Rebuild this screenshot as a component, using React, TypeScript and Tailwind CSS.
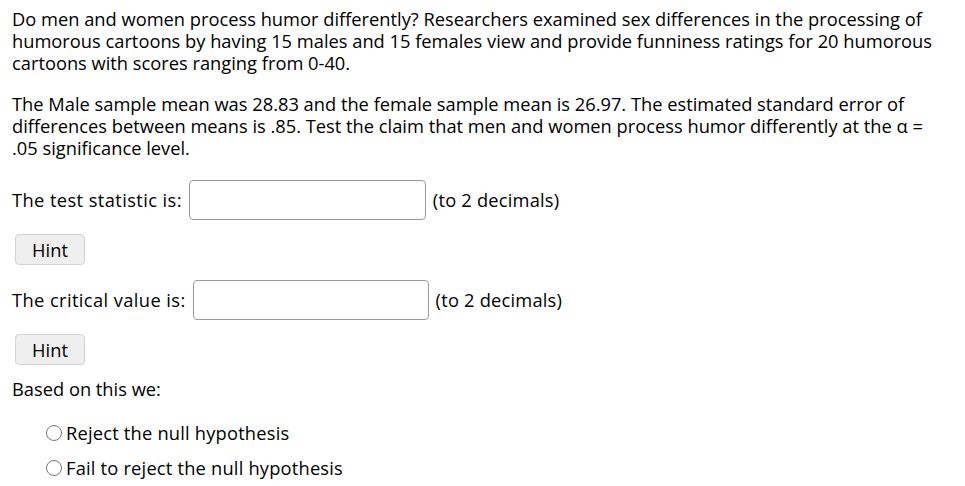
export default function App() {
  return (
    <div className="bg-white text-black px-3 pt-2 pb-4 text-[18.3px] leading-[22px] font-['Open_Sans',sans-serif]">
      <p className="mb-[19px]">
        Do men and women process humor differently? Researchers examined sex differences in the processing of humorous
        cartoons by having 15 males and 15 females view and provide funniness ratings for 20 humorous cartoons with
        scores ranging from 0-40.
      </p>
      <p className="mb-[21px]">
        The Male sample mean was 28.83 and the female sample mean is 26.97. The estimated standard error of differences
        between means is .85. Test the claim that men and women process humor differently at the α = .05 significance
        level.
      </p>

      <div className="flex items-center">
        <span className="tracking-[0.4px]">The test statistic is:</span>
        <input
          type="text"
          className="ml-[7px] h-[40px] w-[237px] rounded-[4px] border border-[#9a9a9a] bg-white"
        />
        <span className="ml-[7px] tracking-[0.2px]">(to 2 decimals)</span>
      </div>
      <button className="mt-[14px] ml-[3px] h-[31px] w-[70px] rounded-[4px] border border-[#d3d3d3] bg-[#efefef] text-center">
        Hint
      </button>

      <div className="mt-[15px] flex items-center">
        <span className="tracking-[0.4px]">The critical value is:</span>
        <input
          type="text"
          className="ml-[7px] h-[40px] w-[236px] rounded-[4px] border border-[#9a9a9a] bg-white"
        />
        <span className="ml-[7px] tracking-[0.2px]">(to 2 decimals)</span>
      </div>
      <button className="mt-[14px] ml-[3px] h-[31px] w-[70px] rounded-[4px] border border-[#d3d3d3] bg-[#efefef] text-center">
        Hint
      </button>

      <div className="mt-[13px]">Based on this we:</div>

      <div className="mt-[22px] ml-[34px] flex flex-col gap-[13px]">
        {["Reject the null hypothesis", "Fail to reject the null hypothesis"].map((label) => (
          <label key={label} className="flex items-center gap-[4px]">
            <span className="inline-block h-[16px] w-[16px] rounded-full border border-[#767676] bg-white" />
            <span className="tracking-[0.2px]">{label}</span>
          </label>
        ))}
      </div>
    </div>
  );
}
